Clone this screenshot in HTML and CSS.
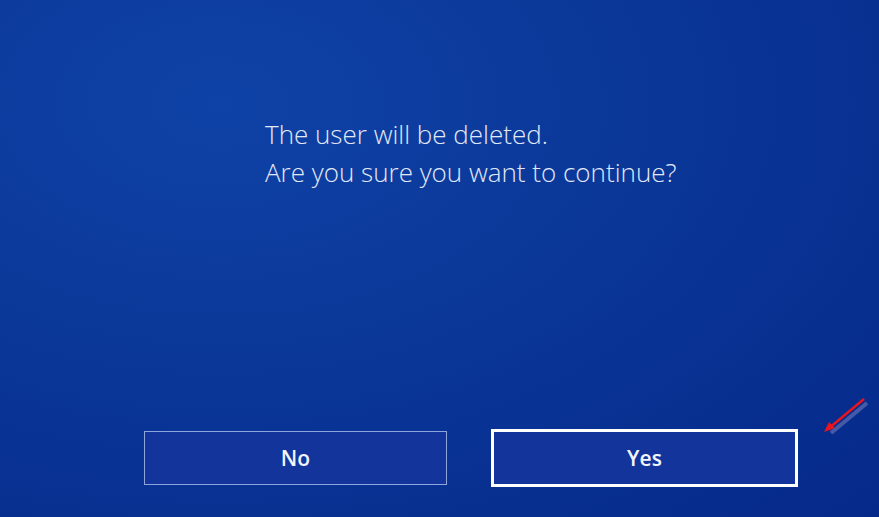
FILE: index.html
```html
<!DOCTYPE html>
<html lang="en">
<head>
  <meta charset="UTF-8">
  <title>Delete User</title>
  <link rel="stylesheet" href="styles.css">
</head>
<body>
  <div class="screen">
    <div class="message">
      <p>The user will be deleted.</p>
      <p>Are you sure you want to continue?</p>
    </div>

    <div class="buttons">
      <button class="btn no">No</button>
      <button class="btn yes">Yes</button>
      <svg class="pointer" width="50" height="44" viewBox="0 0 50 44">
        <path d="M44 6 L8 36" stroke="rgba(120,130,190,0.55)" stroke-width="4" fill="none"/>
        <path d="M41 2 L5 32" stroke="#e8141e" stroke-width="2.5" fill="none"/>
        <polygon points="1,35 6,25 12,31" fill="#e8141e"/>
      </svg>
    </div>
  </div>
</body>
</html>
```

FILE: styles.css
```css
body {
  margin: 0;
  padding: 0;
  font-family: 'Open Sans', sans-serif;
  overflow: hidden;
}

.screen {
  width: 879px;
  height: 517px;
  display: flex;
  flex-direction: column;
  background: radial-gradient(ellipse at 25% 20%, #0f42a6 0%, #0a3798 45%, #05298a 100%);
  color: #e2e8f6;
}

.message {
  padding: 115px 0 0 265px;
}

.message p {
  margin: 0;
  font-size: 26px;
  font-weight: 300;
  line-height: 38px;
}

.buttons {
  position: relative;
  display: flex;
  align-items: center;
  gap: 44px;
  margin-top: 238px;
  padding-left: 144px;
}

.btn {
  font-family: 'Open Sans', sans-serif;
  font-size: 21px;
  font-weight: 600;
  color: #f2f5fc;
  background-color: #13349a;
  cursor: pointer;
}

.btn.no {
  width: 303px;
  height: 54px;
  border: 1px solid #8ea6de;
}

.btn.yes {
  width: 307px;
  height: 58px;
  border: 3px solid #ffffff;
}

.pointer {
  position: absolute;
  left: 823px;
  top: -32px;
}
```
